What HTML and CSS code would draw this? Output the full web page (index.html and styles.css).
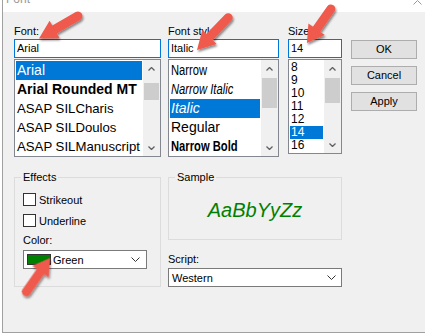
FILE: index.html
```html
<!DOCTYPE html>
<html lang="en">
<head>
    <meta charset="UTF-8">
    <title>Font</title>
    <link rel="stylesheet" href="styles.css">
</head>
<body>

    <div class="window">
        <div class="titlebar">
            <span class="title">Font</span>
            <svg class="title-chevron" width="9" height="5" viewBox="0 0 9 5"><path d="M0.5 4.5 L4.5 0.5 L8.5 4.5" fill="none" stroke="#9a9a9a"/></svg>
        </div>

        <div class="dialog">
            <div class="top-row">
                <!-- Font name -->
                <div class="font-col">
                    <span class="label">Font:</span>
                    <div class="field">Arial</div>
                    <div class="list">
                        <div class="items">
                            <div class="item selected">Arial</div>
                            <div class="item bold">Arial Rounded MT</div>
                            <div class="item small">ASAP SILCharis</div>
                            <div class="item small">ASAP SILDoulos</div>
                            <div class="item small">ASAP SILManuscript</div>
                        </div>
                        <div class="scrollbar">
                            <div class="sb-btn"><svg width="7" height="4" viewBox="0 0 7 4"><path d="M0.5 3.5 L3.5 0.5 L6.5 3.5" fill="none" stroke="#606060" stroke-width="1.3"/></svg></div>
                            <div class="sb-track"><div class="sb-thumb thumb-font"></div></div>
                            <div class="sb-btn"><svg width="7" height="4" viewBox="0 0 7 4"><path d="M0.5 0.5 L3.5 3.5 L6.5 0.5" fill="none" stroke="#606060" stroke-width="1.3"/></svg></div>
                        </div>
                    </div>
                </div>

                <!-- Font style -->
                <div class="style-col">
                    <span class="label">Font style:</span>
                    <div class="field">Italic</div>
                    <div class="list">
                        <div class="items">
                            <div class="item"><span class="narrow">Narrow</span></div>
                            <div class="item italic"><span class="narrow">Narrow Italic</span></div>
                            <div class="item italic selected">Italic</div>
                            <div class="item">Regular</div>
                            <div class="item bold"><span class="narrow">Narrow Bold</span></div>
                        </div>
                        <div class="scrollbar">
                            <div class="sb-btn"><svg width="7" height="4" viewBox="0 0 7 4"><path d="M0.5 3.5 L3.5 0.5 L6.5 3.5" fill="none" stroke="#606060" stroke-width="1.3"/></svg></div>
                            <div class="sb-track"><div class="sb-thumb thumb-style"></div></div>
                            <div class="sb-btn"><svg width="7" height="4" viewBox="0 0 7 4"><path d="M0.5 0.5 L3.5 3.5 L6.5 0.5" fill="none" stroke="#606060" stroke-width="1.3"/></svg></div>
                        </div>
                    </div>
                </div>

                <!-- Size -->
                <div class="size-col">
                    <span class="label">Size:</span>
                    <div class="field">14</div>
                    <div class="list size-list">
                        <div class="items">
                            <div class="item">8</div>
                            <div class="item">9</div>
                            <div class="item">10</div>
                            <div class="item">11</div>
                            <div class="item">12</div>
                            <div class="item selected">14</div>
                            <div class="item">16</div>
                        </div>
                        <div class="scrollbar">
                            <div class="sb-btn"><svg width="7" height="4" viewBox="0 0 7 4"><path d="M0.5 3.5 L3.5 0.5 L6.5 3.5" fill="none" stroke="#606060" stroke-width="1.3"/></svg></div>
                            <div class="sb-track"><div class="sb-thumb thumb-size"></div></div>
                            <div class="sb-btn"><svg width="7" height="4" viewBox="0 0 7 4"><path d="M0.5 0.5 L3.5 3.5 L6.5 0.5" fill="none" stroke="#606060" stroke-width="1.3"/></svg></div>
                        </div>
                    </div>
                </div>

                <div class="buttons">
                    <div class="btn">OK</div>
                    <div class="btn">Cancel</div>
                    <div class="btn">Apply</div>
                </div>
            </div>

            <div class="bottom-row">
                <fieldset class="group effects">
                    <legend>Effects</legend>
                    <div class="check"><span class="box"></span>Strikeout</div>
                    <div class="check second"><span class="box"></span>Underline</div>
                    <span class="label color-label">Color:</span>
                    <div class="combo color-combo">
                        <span class="swatch"></span>
                        <span>Green</span>
                        <svg class="chev" width="9" height="5" viewBox="0 0 9 5"><path d="M0.5 0.5 L4.5 4.5 L8.5 0.5" fill="none" stroke="#333"/></svg>
                    </div>
                </fieldset>

                <div class="right-col">
                    <fieldset class="group sample-group">
                        <legend>Sample</legend>
                        <div class="sample">AaBbYyZz</div>
                    </fieldset>
                    <span class="label script-label">Script:</span>
                    <div class="combo script-combo">
                        <span>Western</span>
                        <svg class="chev" width="9" height="5" viewBox="0 0 9 5"><path d="M0.5 0.5 L4.5 4.5 L8.5 0.5" fill="none" stroke="#333"/></svg>
                    </div>
                </div>
            </div>
        </div>
    </div>

    <!-- annotation arrows drawn over the dialog -->
    <svg class="arrows" width="425" height="334" viewBox="0 0 425 334">
        <defs>
            <filter id="shadow" x="-30%" y="-30%" width="160%" height="160%">
                <feDropShadow dx="1" dy="2" stdDeviation="1.2" flood-color="#000" flood-opacity="0.45"/>
            </filter>
            <g id="arrow">
                <line x1="12" y1="0" x2="45" y2="0" stroke="#ef5a4d" stroke-width="9" stroke-linecap="round"/>
                <polygon points="0,0 18,-10 18,10" fill="#ef5a4d"/>
            </g>
        </defs>
        <g filter="url(#shadow)">
            <use href="#arrow" transform="translate(39 38.5) rotate(-30)"/>
            <use href="#arrow" transform="translate(197 50) rotate(-46)"/>
            <use href="#arrow" transform="translate(307 43) rotate(-55) scale(0.93 1)"/>
            <use href="#arrow" transform="translate(50 258) rotate(125) scale(0.92 1)"/>
        </g>
    </svg>

</body>
</html>
```

FILE: styles.css
```css
* {
    box-sizing: border-box;
}

body {
    margin: 0;
    width: 425px;
    height: 334px;
    overflow: hidden;
    position: relative;
    background: #fff;
    font-family: "Liberation Sans", Arial, sans-serif;
    color: #000;
}

/* window frame */
.window {
    margin-left: 2px;
    height: 333px;
    border-left: 1px solid #a0a0a0;
    border-bottom: 1px solid #a0a0a0;
    background: #f0f0f0;
}
.titlebar {
    height: 12px;
    background: #fff;
    display: flex;
    justify-content: space-between;
    overflow: hidden;
}
.title {
    font-size: 12px;
    line-height: 14px;
    color: #9a9a9a;
    margin: -8px 0 0 3px;
}
.title-chevron {
    margin-right: 3px;
}

.dialog {
    display: flex;
    flex-direction: column;
    gap: 14px;
    padding: 13px 0 0 11px;
}

.top-row,
.bottom-row {
    display: flex;
    align-items: flex-start;
}
.font-col { width: 147px; }
.style-col { width: 111px; margin-left: 7px; }
.size-col { width: 54px; margin-left: 9px; }

.label {
    display: block;
    font-size: 11px;
    line-height: 13px;
    margin-bottom: 1px;
}

.field {
    height: 19px;
    margin-bottom: 1px;
    padding-left: 2px;
    border: 1px solid #0078d7;
    background: #fff;
    font-size: 11px;
    line-height: 17px;
}

/* list boxes */
.list {
    display: flex;
    height: 98px;
    border: 1px solid #828790;
    background: #fff;
}
.items {
    flex: 1;
    padding: 1px;
    overflow: hidden;
}
.item {
    height: 19px;
    padding-left: 1px;
    font-size: 14px;
    line-height: 19px;
    white-space: nowrap;
}
.item.small { font-size: 13.2px; }
.item.bold { font-weight: bold; }
.item.italic { font-style: italic; }
.item.selected {
    background: #0078d7;
    color: #fff;
}
.narrow {
    display: inline-block;
    transform: scaleX(0.8);
    transform-origin: left center;
}

.size-list { height: 95px; }
.size-list .item {
    height: 13px;
    font-size: 12px;
    line-height: 13px;
}

.scrollbar {
    width: 17px;
    display: flex;
    flex-direction: column;
    background: #f0f0f0;
}
.sb-btn {
    height: 17px;
    display: flex;
    align-items: center;
    justify-content: center;
}
.sb-track { flex: 1; }
.sb-thumb {
    margin: 0 1px;
    background: #cdcdcd;
}
.thumb-font { margin-top: 6px; height: 17px; }
.thumb-style { margin-top: 1px; height: 30px; }
.thumb-size { margin-top: 1px; height: 25px; }

/* buttons */
.buttons {
    width: 66px;
    margin-left: 9px;
    padding-top: 15px;
    display: flex;
    flex-direction: column;
    gap: 7px;
}
.btn {
    height: 19px;
    border: 1px solid #adadad;
    background: #e1e1e1;
    font-size: 11px;
    line-height: 17px;
    text-align: center;
}

/* group boxes */
.group {
    margin: 0;
    min-width: 0;
    border: 1px solid #dcdcdc;
}
.group legend {
    padding: 0 2px;
    margin-left: -2px;
    font-size: 11px;
    line-height: 13px;
}
.effects {
    width: 147px;
    padding: 0 8px 17px;
}
.check {
    display: flex;
    align-items: center;
    height: 15px;
    margin-top: 8px;
    font-size: 11px;
}
.check.second { margin-top: 6px; }
.box {
    width: 13px;
    height: 13px;
    margin-right: 3px;
    border: 1px solid #333;
    background: #fff;
}
.color-label {
    margin: 6px 0 3px;
}

.combo {
    height: 19px;
    display: flex;
    align-items: center;
    border: 1px solid #7a7a7a;
    background: #fff;
    font-size: 11px;
}
.combo .chev { margin-left: auto; }
.color-combo {
    width: 124px;
    padding: 0 6px 0 3px;
}
.swatch {
    width: 24px;
    height: 11px;
    margin-right: 2px;
    border: 1px solid #333;
    background: #008000;
}

.right-col {
    width: 174px;
    margin-left: 7px;
}
.sample-group {
    padding: 14px 8px 17px;
}
.sample {
    text-align: center;
    font-size: 20px;
    line-height: 24px;
    font-style: italic;
    color: #008000;
}
.script-label {
    margin: 13px 0 2px;
}
.script-combo {
    padding: 0 5px 0 3px;
}

.arrows {
    position: absolute;
    top: 0;
    left: 0;
    pointer-events: none;
}
```
